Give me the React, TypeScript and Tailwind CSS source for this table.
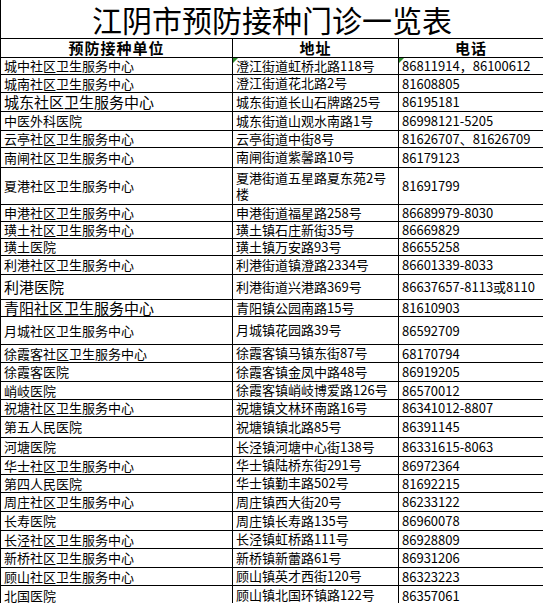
import React from "react";

type Row = {
  name: string;
  addr: React.ReactNode;
  phone: string;
  h: number;
  big?: boolean;
};

const rows: Row[] = [
  { name: "城中社区卫生服务中心", addr: "澄江街道虹桥北路118号", phone: "86811914，86100612", h: 17 },
  { name: "城南社区卫生服务中心", addr: "澄江街道花北路2号", phone: "81608805", h: 18 },
  { name: "城东社区卫生服务中心", addr: "城东街道长山石牌路25号", phone: "86195181", h: 19, big: true },
  { name: "中医外科医院", addr: "城东街道山观水南路1号", phone: "86998121-5205", h: 19 },
  { name: "云亭社区卫生服务中心", addr: "云亭街道中街8号", phone: "81626707、81626709", h: 17 },
  { name: "南闸社区卫生服务中心", addr: "南闸街道紫馨路10号", phone: "86179123", h: 20 },
  {
    name: "夏港社区卫生服务中心",
    addr: (
      <>
        夏港街道五星路夏东苑2号
        <br />楼
      </>
    ),
    phone: "81691799",
    h: 37,
  },
  { name: "申港社区卫生服务中心", addr: "申港街道福星路258号", phone: "86689979-8030", h: 17 },
  { name: "璜土社区卫生服务中心", addr: "璜土镇石庄新街35号", phone: "86669829", h: 16 },
  { name: "璜土医院", addr: "璜土镇万安路93号", phone: "86655258", h: 16 },
  { name: "利港社区卫生服务中心", addr: "利港街道镇澄路2334号", phone: "86601339-8033", h: 19 },
  { name: "利港医院", addr: "利港街道兴港路369号", phone: "86637657-8113或8110", h: 25, big: true },
  { name: "青阳社区卫生服务中心", addr: "青阳镇公园南路15号", phone: "81610903", h: 15, big: true },
  { name: "月城社区卫生服务中心", addr: "月城镇花园路39号", phone: "86592709", h: 28 },
  { name: "徐霞客社区卫生服务中心", addr: "徐霞客镇马镇东街87号", phone: "68170794", h: 18 },
  { name: "徐霞客医院", addr: "徐霞客镇金凤中路48号", phone: "86919205", h: 19 },
  { name: "峭岐医院", addr: "徐霞客镇峭岐博爱路126号", phone: "86570012", h: 18 },
  { name: "祝塘社区卫生服务中心", addr: "祝塘镇文林环南路16号", phone: "86341012-8807", h: 17 },
  { name: "第五人民医院", addr: "祝塘镇镇北路85号", phone: "86391145", h: 21 },
  { name: "河塘医院", addr: "长泾镇河塘中心街138号", phone: "86331615-8063", h: 19 },
  { name: "华士社区卫生服务中心", addr: "华士镇陆桥东街291号", phone: "86972364", h: 18 },
  { name: "第四人民医院", addr: "华士镇勤丰路502号", phone: "81692215", h: 18 },
  { name: "周庄社区卫生服务中心", addr: "周庄镇西大街20号", phone: "86233122", h: 19 },
  { name: "长寿医院", addr: "周庄镇长寿路135号", phone: "86960078", h: 19 },
  { name: "长泾社区卫生服务中心", addr: "长泾镇虹桥路111号", phone: "86928809", h: 18 },
  { name: "新桥社区卫生服务中心", addr: "新桥镇新蕾路61号", phone: "86931206", h: 19 },
  { name: "顾山社区卫生服务中心", addr: "顾山镇英才西街120号", phone: "86323223", h: 18 },
  { name: "北国医院", addr: "顾山镇北国环镇路122号", phone: "86357061", h: 20 },
];

// little green "number stored as text" marker, like in the spreadsheet
const Marker = () => (
  <span className="absolute left-0 top-0 h-0 w-0 border-r-[5px] border-t-[5px] border-r-transparent border-t-[#2e8b2e]" />
);

export default function App() {
  return (
    <div
      className="w-[543px] h-[603px] overflow-hidden bg-white text-black"
      style={{ fontFamily: '"Noto Sans CJK SC", sans-serif' }}
    >
      <table className="w-[543px] table-fixed border-collapse">
        <colgroup>
          <col className="w-[232px]" />
          <col className="w-[166px]" />
          <col className="w-[145px]" />
        </colgroup>
        <tbody>
          <tr className="h-[38px]">
            <td
              colSpan={3}
              className="border-x border-b border-black p-0 text-center align-middle text-[30px] leading-[36px]"
            >
              江阴市预防接种门诊一览表
            </td>
          </tr>
          <tr className="h-[19px]">
            <td className="border border-black p-0 text-center text-[15px] font-bold leading-[17px] tracking-[1px]">
              预防接种单位
            </td>
            <td className="border border-black p-0 text-center text-[15px] font-bold leading-[17px] tracking-[1px]">
              地址
            </td>
            <td className="border border-black p-0 text-center text-[15px] font-bold leading-[17px] tracking-[1px]">
              电话
            </td>
          </tr>
          {rows.map((r, i) => (
            <tr key={i} style={{ height: r.h }}>
              <td
                className={
                  r.big
                    ? "border border-black py-0 pl-[3px] pr-0 align-middle text-[15px] leading-[15px] whitespace-nowrap"
                    : "border border-black py-0 pl-[3px] pr-0 align-middle text-[13px] leading-[15px] whitespace-nowrap"
                }
              >
                {r.name}
              </td>
              <td className="relative border border-black py-0 pl-[3px] pr-0 align-middle text-[13px] leading-[16px] whitespace-nowrap">
                {i === 0 && <Marker />}
                {r.addr}
              </td>
              <td className="relative border border-black py-0 pl-[3px] pr-0 align-middle text-[13px] leading-[15px] whitespace-nowrap">
                {i === 0 && <Marker />}
                {r.phone}
              </td>
            </tr>
          ))}
          <tr className="h-[18px]">
            <td className="border border-black p-0" />
            <td className="border border-black p-0" />
            <td className="border border-black p-0" />
          </tr>
        </tbody>
      </table>
    </div>
  );
}
